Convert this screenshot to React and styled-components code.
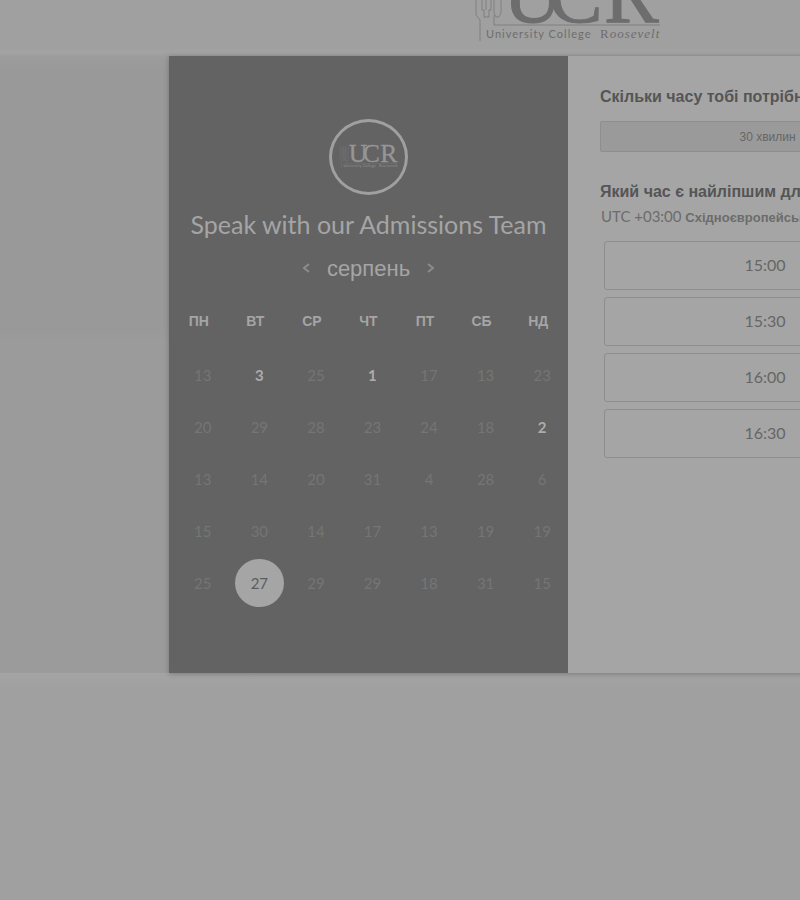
import React from "react";
import styled, { createGlobalStyle } from "styled-components";

const GlobalStyle = createGlobalStyle`
  *, *::before, *::after { box-sizing: border-box; }
  html { background: #a0a0a0; }
  body { margin: 0; overflow-x: hidden; font-family: "Liberation Sans", Arial, sans-serif; color: #555; }
  #root { overflow: hidden; }
  h1, h2, p, ul, table { margin: 0; padding: 0; }
  button { font: inherit; color: inherit; cursor: pointer; }
`;

const columns = "minmax(169px, 1fr) minmax(798px, 798px) minmax(169px, 1fr)";

const Header = styled.header`
  display: grid;
  grid-template-columns: ${columns};
  grid-template-rows: 56px;
  align-items: end;
  overflow: hidden;
  background: linear-gradient(#a0a0a0 48px, #a3a3a3 52px, #9d9d9d);
`;

const HeaderLogo = styled.a`
  grid-column: 2;
  display: flex;
  justify-content: center;
  padding-bottom: 14px;
`;

const Band = styled.main`
  display: grid;
  grid-template-columns: ${columns};
  background: linear-gradient(#9c9c9c, #999 16px, #999 276px, #9b9b9b 284px, #9b9b9b);
`;

const Card = styled.div`
  grid-column: 2;
  display: grid;
  grid-template-columns: 1fr 1fr;
  min-height: 617px;
  background: #a5a5a5;
  box-shadow: 0 1px 5px rgba(0, 0, 0, 0.25);
`;

const CalendarPanel = styled.section`
  display: flex;
  flex-direction: column;
  align-items: center;
  padding: 63px 0 60px;
  background: #636363;
  color: #a5a5a5;
`;

const Avatar = styled.div`
  display: flex;
  align-items: center;
  justify-content: center;
  width: 79px;
  height: 76px;
  border: 3px solid #a0a0a0;
  border-radius: 50%;
`;

const Title = styled.h1`
  margin-top: 13px;
  font: 400 25px/32px Lato, sans-serif;
  white-space: nowrap;
`;

const MonthBar = styled.div`
  display: flex;
  align-items: center;
  gap: 12px;
  margin-top: 13px;
`;

const MonthName = styled.h2`
  font-size: 22px;
  font-weight: 400;
  line-height: 32px;
`;

const MonthButton = styled.button`
  display: flex;
  padding: 4px;
  border: 0;
  background: none;
  color: #8c8c8c;
`;

const Calendar = styled.table`
  width: 396px;
  margin-top: 13px;
  table-layout: fixed;
  border-collapse: collapse;
`;

const Weekday = styled.th`
  height: 51px;
  padding: 0 0 6px;
  font-size: 14px;
  line-height: 20px;
`;

const DayCell = styled.td`
  height: 52px;
  padding: 0 0 0 8px;
`;

const Day = styled.button`
  display: block;
  width: 100%;
  height: 48px;
  padding: 0;
  border: 0;
  border-radius: 50%;
  background: ${(p) => (p.$state === "selected" ? "#a5a5a5" : "none")};
  color: ${(p) => ({ selected: "#5c5c5c", open: "#acacac" })[p.$state] || "#757575"};
  font: ${(p) => (p.$state === "open" ? 700 : 400)} 15px/20px Lato, sans-serif;
`;

const Times = styled.section`
  padding: 31px 32px;
`;

const Question = styled.h2`
  font-size: 16px;
  line-height: 20px;
  white-space: nowrap;
`;

const Duration = styled.button`
  display: block;
  width: 100%;
  height: 31px;
  margin: 14px 0 30px;
  border: 1px solid #8e8e8e;
  border-radius: 2px;
  background: #9a9a9a;
  color: #666;
  font-size: 12px;
`;

const Zone = styled.p`
  margin-top: 4px;
  padding-left: 1px;
  font: 400 15px/20px Lato, sans-serif;
  color: #6c6c6c;
  white-space: nowrap;
`;

const ZoneName = styled.strong`
  font: 700 13px/20px "Liberation Sans", Arial, sans-serif;
`;

const Slots = styled.ul`
  display: grid;
  gap: 7px;
  margin: 13px 9px 0 4px;
  list-style: none;
`;

const Slot = styled.button`
  width: 100%;
  height: 49px;
  padding: 0 0 2px;
  border: 1px solid #8e8e8e;
  border-radius: 3px;
  background: #a5a5a5;
  color: #666;
  font: 400 16px/20px Lato, sans-serif;
`;

const SlotItem = styled.li`
  display: flex;
`;

const Footer = styled.footer`
  height: 227px;
  background: linear-gradient(#a4a4a4, #a0a0a0 16px);
`;

function Tower() {
  return (
    <path
      d="M1 0V44L5 49V70M7 0V39H9V46H14V39H16V0M11 0V39M19 0V42L21 46H24L26 42V0M19 44V54H185"
      fill="none"
      stroke="currentColor"
      strokeWidth="1"
      opacity="0.6"
    />
  );
}

const LogoArt = styled.svg`
  display: block;
  color: ${(p) => p.$tone};
  fill: currentColor;
  overflow: visible;
`;

function Logo({ width, height, tone }) {
  return (
    <LogoArt width={width} height={height} viewBox="0 0 186 71" $tone={tone} role="img" aria-label="University College Roosevelt">
      <Tower />
      <g fontFamily="Liberation Serif, serif" fontSize="82" stroke="currentColor" strokeWidth="1">
        <text x="28" y="51">U</text>
        <text x="73" y="51">C</text>
        <text x="129" y="51">R</text>
      </g>
      <text x="11" y="67" fontFamily="Lato, sans-serif" fontSize="11" letterSpacing="1">University College</text>
      <text x="125" y="67" fontFamily="Liberation Serif, serif" fontSize="13" fontStyle="italic" letterSpacing="1">
        <tspan fontStyle="normal">R</tspan>oosevelt
      </text>
    </LogoArt>
  );
}

function Chevron({ d }) {
  return (
    <svg width="9" height="12" viewBox="0 0 9 12" fill="none" stroke="currentColor" strokeWidth="2" aria-hidden="true">
      <path d={d} />
    </svg>
  );
}

const weekdays = ["ПН", "ВТ", "СР", "ЧТ", "ПТ", "СБ", "НД"];
const weeks = [
  [13, 3, 25, 1, 17, 13, 23],
  [20, 29, 28, 23, 24, 18, 2],
  [13, 14, 20, 31, 4, 28, 6],
  [15, 30, 14, 17, 13, 19, 19],
  [25, 27, 29, 29, 18, 31, 15],
];
const openDays = [1, 2, 3];
const slots = ["15:00", "15:30", "16:00", "16:30"];

const stateOf = (day) => (day === 27 ? "selected" : openDays.includes(day) ? "open" : "closed");

export default function App() {
  return (
    <>
      <GlobalStyle />
      <Header>
        <HeaderLogo href="#">
          <Logo width={186} height={71} tone="#6d6d6d" />
        </HeaderLogo>
      </Header>
      <Band>
        <Card>
          <CalendarPanel>
            <Avatar>
              <Logo width={58} height={23} tone="#969696" />
            </Avatar>
            <Title>Speak with our Admissions Team</Title>
            <MonthBar>
              <MonthButton aria-label="Попередній місяць"><Chevron d="M7 1L2 5L7 9" /></MonthButton>
              <MonthName>серпень</MonthName>
              <MonthButton aria-label="Наступний місяць"><Chevron d="M2 1L7 5L2 9" /></MonthButton>
            </MonthBar>
            <Calendar>
              <thead>
                <tr>{weekdays.map((name) => <Weekday key={name} scope="col">{name}</Weekday>)}</tr>
              </thead>
              <tbody>
                {weeks.map((week, row) => (
                  <tr key={row}>
                    {week.map((day, column) => (
                      <DayCell key={column}>
                        <Day $state={stateOf(day)} aria-pressed={day === 27}>{day}</Day>
                      </DayCell>
                    ))}
                  </tr>
                ))}
              </tbody>
            </Calendar>
          </CalendarPanel>
          <Times>
            <Question>Скільки часу тобі потрібно?</Question>
            <Duration>30 хвилин</Duration>
            <Question>Який час є найліпшим для тебе?</Question>
            <Zone>UTC +03:00 <ZoneName>Східноєвропейський час</ZoneName></Zone>
            <Slots>
              {slots.map((time) => <SlotItem key={time}><Slot>{time}</Slot></SlotItem>)}
            </Slots>
          </Times>
        </Card>
      </Band>
      <Footer />
    </>
  );
}
